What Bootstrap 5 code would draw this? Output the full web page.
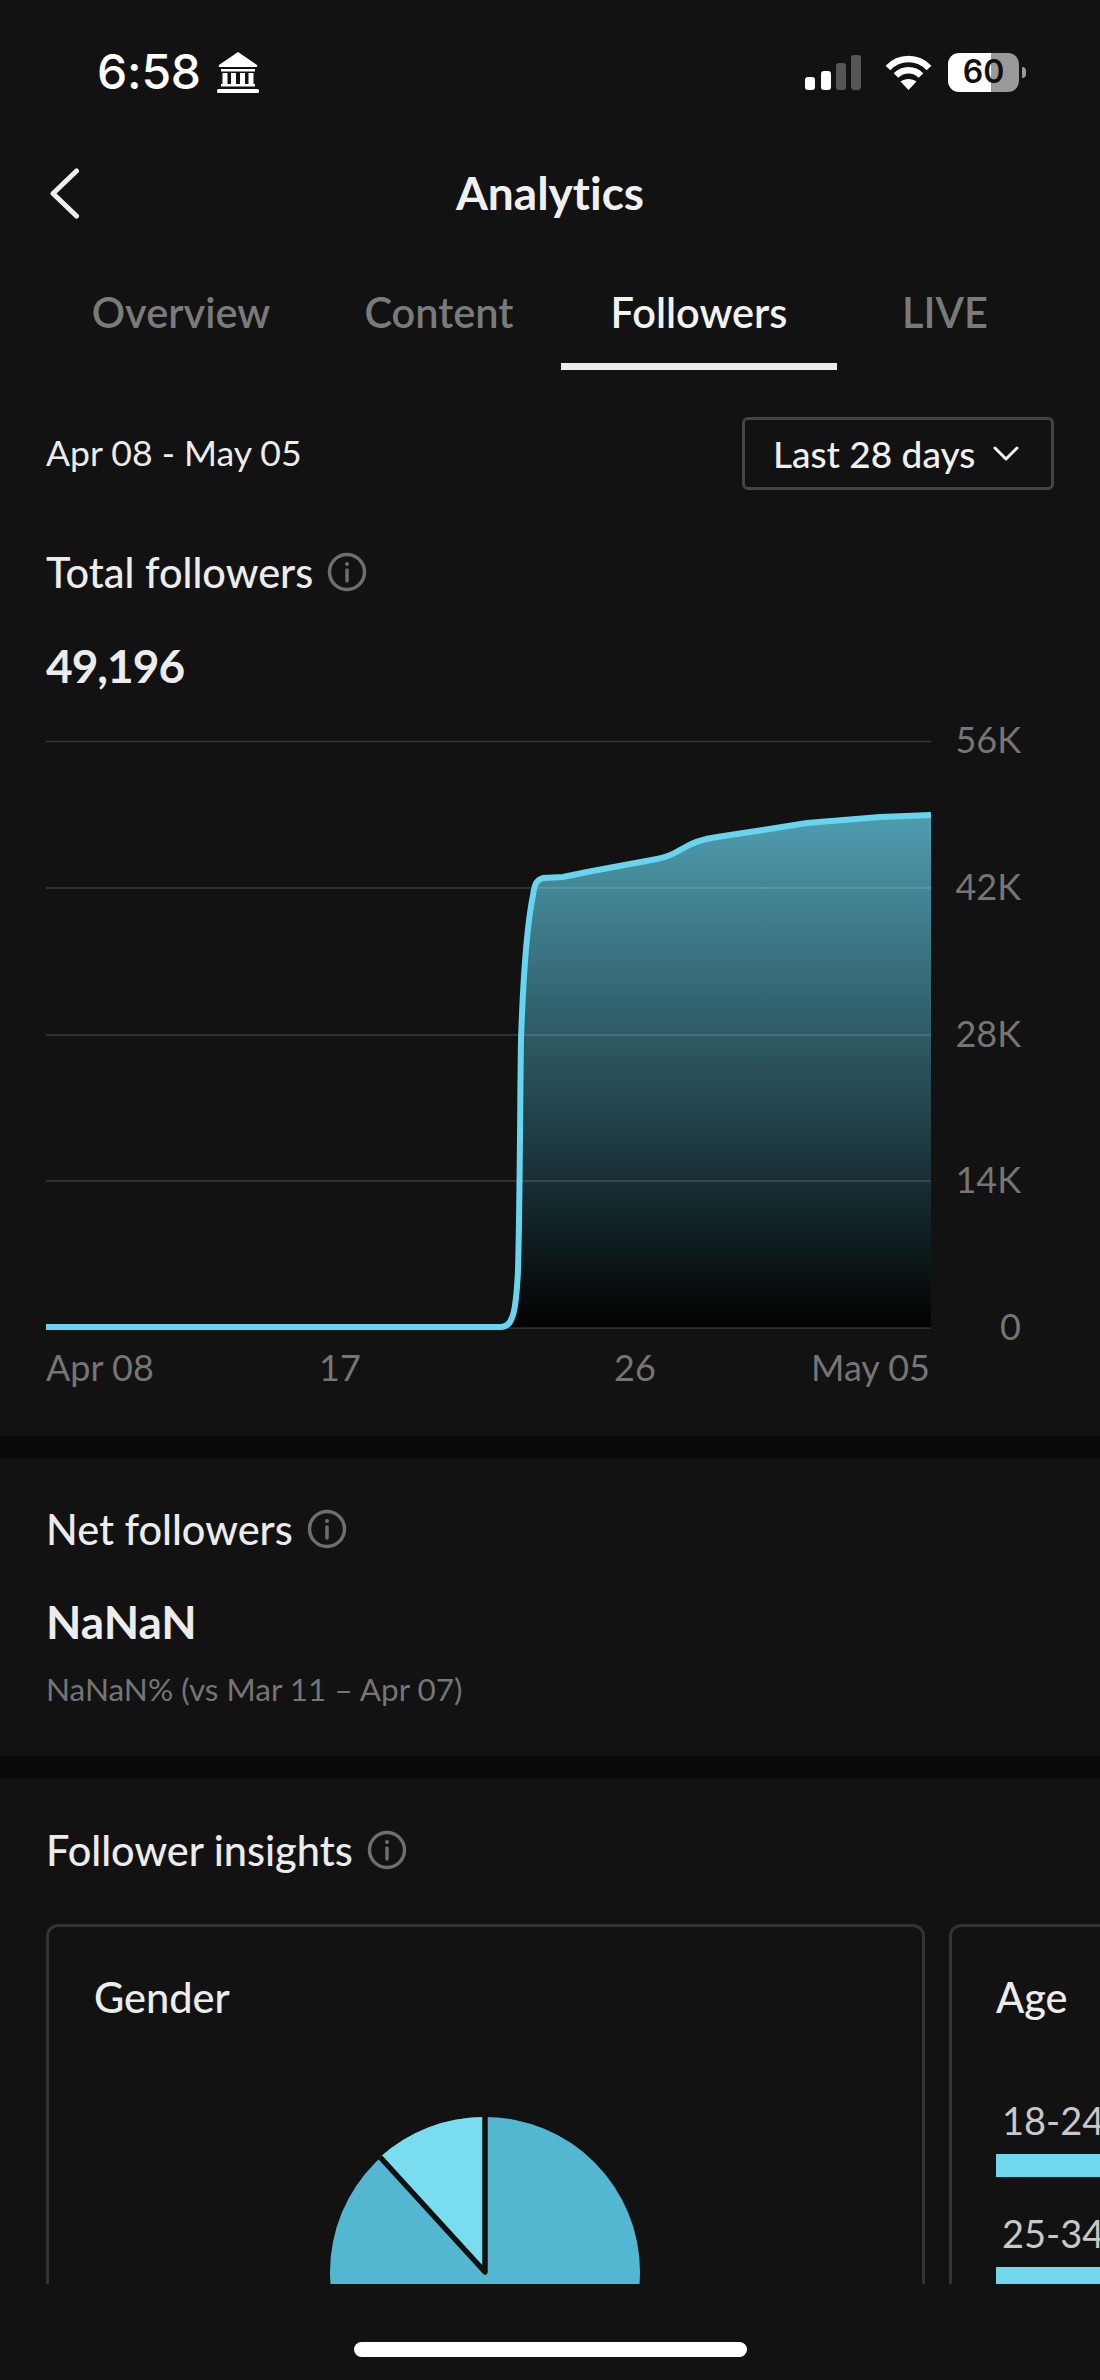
<!DOCTYPE html>
<html lang="en">
<head>
    <meta charset="UTF-8">
    <meta name="viewport" content="width=device-width, initial-scale=1.0">
    <title>Analytics</title>
    <link href="https://cdn.jsdelivr.net/npm/bootstrap@5.3.0/dist/css/bootstrap.min.css" rel="stylesheet">
    <style>
        body { background: #121212; color: #ececec; font-family: "Lato", "Liberation Sans", sans-serif; font-variant-ligatures: none; }
        .phone { width: 1100px; height: 2380px; overflow: hidden; background: #121212; }

        .status-row { height: 144px; padding: 0 74px 0 97px; color: #fff; }
        .status-time { font-family: "Inter", sans-serif; font-size: 48px; font-weight: 500; letter-spacing: -.2px; line-height: 1; }
        .battery-body { width: 71px; height: 39px; border-radius: 11px; background: linear-gradient(90deg, #fff 60%, #999 60%); color: #111; font-family: "Inter", sans-serif; font-size: 32px; font-weight: 600; line-height: 1; }
        .battery-cap { width: 4px; height: 11px; margin-left: 3px; background: #999; border-radius: 0 4px 4px 0; }

        .head-row { height: 98px; padding: 0 50px; }
        .head-title { flex-grow: 1; text-align: center; font-size: 46px; font-weight: 700; margin-top: -2px; color: #f0f0f0; }
        .back-icon { width: 29px; height: 51px; flex-shrink: 0; }
        .head-spacer { width: 29px; flex-shrink: 0; }

        .tabs-row { height: 128px; margin-left: 45px; }
        .tabs-row .nav-link { padding: 0; height: 128px; line-height: 140px; text-align: center; font-size: 41.5px; font-weight: 600; color: #7a7a7a; }
        .tabs-row .nav-link.active { color: #f2f2f2; border-bottom: 7px solid #ececec; }
        .tab-overview { width: 272px; }
        .tab-content-link { width: 244px; }
        .tab-followers { width: 276px; }
        .tab-live { width: 216px; }

        .page-pad { padding-left: 46px; padding-right: 46px; }
        .range-wrap { margin-top: 47px; }
        .range-text { font-size: 35.6px; margin-top: -2px; }
        .range-btn { width: 312px; height: 73px; padding: 0 0 0 28px; border: 3px solid #444; border-radius: 6px; color: #f0f0f0; font-size: 37px; font-weight: 500; gap: 18px; }
        .range-btn:hover { color: #f0f0f0; border-color: #444; }

        .block-title { font-size: 41.5px; font-weight: 500; line-height: 50px; color: #ececec; gap: 14px; }
        .info-icon { width: 40px; height: 40px; flex-shrink: 0; }
        .block-value { font-size: 46px; font-weight: 700; line-height: 60px; }
        .total-value { margin-top: 39px; letter-spacing: -1px; }
        .net-value { margin-top: 38px; }
        .block-note { font-size: 31.5px; line-height: 40px; color: #757575; margin-top: 17px; }

        .followers-sec { height: 946px; padding-top: 57px; }
        .net-sec { height: 298px; padding-top: 46px; }
        .insights-sec { height: 506px; padding-top: 47px; overflow: hidden; }
        .gap-band { height: 22px; background: #0a0a0a; }

        .chart-svg { display: block; width: 1100px; height: 740px; margin-left: -46px; }
        .axis-text { font-family: "Lato", "Liberation Sans", sans-serif; font-size: 36px; fill: #757575; }

        .card-strip { margin-top: 49px; margin-left: 46px; gap: 24px; width: 1200px; }
        .stat-card { flex-shrink: 0; height: 500px; background: transparent; border: 3px solid #333; border-radius: 12px; color: #ececec; }
        .gender-card { width: 879px; padding: 45px 45px; }
        .age-card { width: 300px; padding: 45px 44px; }
        .stat-card-title { font-size: 41.5px; font-weight: 500; line-height: 50px; flex-shrink: 0; }
        .age-first { margin-top: 75px; }
        .age-label { font-size: 38px; line-height: 46px; color: #c8c8c8; padding-left: 6px; white-space: nowrap; flex-shrink: 0; }
        .age-bar { height: 23px; background: #6fd8ee; margin-top: 11px; margin-bottom: 33px; width: 300px; flex-shrink: 0; }
        .pie-svg { display: block; flex-shrink: 0; width: 310px; height: 320px; margin: 95px 0 0 236px; }

        .home-area { height: 96px; padding-top: 58px; }
        .home-bar { width: 393px; height: 15px; border-radius: 8px; background: #fff; }
    </style>
</head>
<body>
    <div class="phone">
        <!-- status bar -->
        <div class="status-row d-flex align-items-center justify-content-between">
            <div class="d-flex align-items-center gap-3">
                <span class="status-time">6:58</span>
                <svg width="42" height="41" viewBox="0 0 42 41" fill="#fff">
                    <path d="M21 0 L40 13 Q41 15 39 15 L3 15 Q1 15 2 13 Z"/>
                    <rect x="4" y="17" width="34" height="2.5"/>
                    <rect x="5.5" y="21" width="5" height="13"/><rect x="14" y="21" width="5" height="13"/>
                    <rect x="23" y="21" width="5" height="13"/><rect x="31.5" y="21" width="5" height="13"/>
                    <rect x="4" y="32" width="34" height="2.5"/>
                    <rect x="0" y="37" width="42" height="4" rx="1.5"/>
                </svg>
            </div>
            <div class="d-flex align-items-center">
                <svg width="56" height="35" viewBox="0 0 56 35" class="me-4">
                    <rect x="0" y="22" width="10" height="13" rx="3" fill="#fff"/>
                    <rect x="16" y="16" width="10" height="19" rx="3" fill="#fff"/>
                    <rect x="31" y="8" width="10" height="27" rx="3" fill="#555"/>
                    <rect x="46" y="0" width="10" height="35" rx="3" fill="#555"/>
                </svg>
                <svg width="47" height="35" viewBox="0 0 47 35" fill="none" stroke="#fff" stroke-width="6.5" class="me-3">
                    <path d="M3 13 C14 1 33 1 44 13"/>
                    <path d="M11 20.5 C18 13.5 29 13.5 36 20.5"/>
                    <path d="M23.5 35 L15.5 26.5 C20 23 27 23 31.5 26.5 Z" fill="#fff" stroke="none"/>
                </svg>
                <div class="battery-body d-flex align-items-center justify-content-center">60</div>
                <div class="battery-cap"></div>
            </div>
        </div>

        <!-- header -->
        <div class="head-row d-flex align-items-center">
            <svg class="back-icon" viewBox="0 0 29 51" fill="none" stroke="#eee" stroke-width="5" stroke-linecap="round" stroke-linejoin="round">
                <path d="M26.5 3 L3 25.5 L26.5 48"/>
            </svg>
            <div class="head-title">Analytics</div>
            <div class="head-spacer"></div>
        </div>

        <!-- tabs -->
        <ul class="nav tabs-row flex-nowrap">
            <li class="nav-item tab-overview"><a class="nav-link" href="#">Overview</a></li>
            <li class="nav-item tab-content-link"><a class="nav-link" href="#">Content</a></li>
            <li class="nav-item tab-followers"><a class="nav-link active" href="#">Followers</a></li>
            <li class="nav-item tab-live"><a class="nav-link" href="#">LIVE</a></li>
        </ul>

        <!-- date range -->
        <div class="page-pad range-wrap d-flex align-items-center justify-content-between">
            <span class="range-text">Apr 08 - May 05</span>
            <button type="button" class="btn range-btn d-flex align-items-center">
                Last 28 days
                <svg width="26" height="15" viewBox="0 0 26 15" fill="none" stroke="#f0f0f0" stroke-width="3" stroke-linecap="round" stroke-linejoin="round"><path d="M2 2 L13 13 L24 2"/></svg>
            </button>
        </div>

        <!-- total followers -->
        <div class="followers-sec page-pad">
            <div class="block-title d-flex align-items-center">
                Total followers
                <svg class="info-icon" viewBox="0 0 40 40" fill="none" stroke="#6e6e6e" stroke-width="3.5"><circle cx="20" cy="20" r="17.5"/><path d="M20 18 V29" stroke-linecap="round"/><circle cx="20" cy="12" r="2" fill="#6e6e6e" stroke="none"/></svg>
            </div>
            <div class="block-value total-value">49,196</div>
            <svg class="chart-svg" viewBox="0 696 1100 740">
                <defs>
                    <linearGradient id="areaFade" x1="0" y1="815" x2="0" y2="1328" gradientUnits="userSpaceOnUse">
                        <stop offset="0" stop-color="#4f9db0"/>
                        <stop offset="1" stop-color="#020202"/>
                    </linearGradient>
                </defs>
                <path fill="url(#areaFade)" d="M505 1328 C512 1328 516 1315 518 1270 C520 1200 520 1100 521 1040 C523 980 526 930 533 895 C535 882 537 880 543 878 L563 877 L587 872 L657 859 C668 857 675 853 680 850 C688 845 700 839 717 837 L763 830 L807 823 L880 817 L931 815 L931 1328 Z"/>
                <g stroke="#fff" stroke-opacity=".17" stroke-width="1.5">
                    <line x1="46" x2="931" y1="741.5" y2="741.5"/>
                    <line x1="46" x2="931" y1="888" y2="888"/>
                    <line x1="46" x2="931" y1="1035" y2="1035"/>
                    <line x1="46" x2="931" y1="1181" y2="1181"/>
                    <line x1="46" x2="931" y1="1328" y2="1328"/>
                </g>
                <path fill="none" stroke="#67d5ef" stroke-width="6" d="M46 1327 L500 1327 C512 1328 516 1315 518 1270 C520 1200 520 1100 521 1040 C523 980 526 930 533 895 C535 882 537 880 543 878 L563 877 L587 872 L657 859 C668 857 675 853 680 850 C688 845 700 839 717 837 L763 830 L807 823 L880 817 L931 815"/>
                <g class="axis-text" text-anchor="end">
                    <text x="1021" y="753">56K</text>
                    <text x="1021" y="900">42K</text>
                    <text x="1021" y="1047">28K</text>
                    <text x="1021" y="1193">14K</text>
                    <text x="1021" y="1340">0</text>
                </g>
                <g class="axis-text">
                    <text x="46" y="1381">Apr 08</text>
                    <text x="340" y="1381" text-anchor="middle">17</text>
                    <text x="635" y="1381" text-anchor="middle">26</text>
                    <text x="930" y="1381" text-anchor="end">May 05</text>
                </g>
            </svg>
        </div>
        <div class="gap-band"></div>

        <!-- net followers -->
        <div class="net-sec page-pad">
            <div class="block-title d-flex align-items-center">
                Net followers
                <svg class="info-icon" viewBox="0 0 40 40" fill="none" stroke="#6e6e6e" stroke-width="3.5"><circle cx="20" cy="20" r="17.5"/><path d="M20 18 V29" stroke-linecap="round"/><circle cx="20" cy="12" r="2" fill="#6e6e6e" stroke="none"/></svg>
            </div>
            <div class="block-value net-value">NaNaN</div>
            <div class="block-note">NaNaN% (vs Mar 11 – Apr 07)</div>
        </div>
        <div class="gap-band"></div>

        <!-- follower insights -->
        <div class="insights-sec">
            <div class="block-title page-pad d-flex align-items-center">
                Follower insights
                <svg class="info-icon" viewBox="0 0 40 40" fill="none" stroke="#6e6e6e" stroke-width="3.5"><circle cx="20" cy="20" r="17.5"/><path d="M20 18 V29" stroke-linecap="round"/><circle cx="20" cy="12" r="2" fill="#6e6e6e" stroke="none"/></svg>
            </div>
            <div class="card-strip d-flex">
                <div class="card stat-card gender-card">
                    <div class="stat-card-title">Gender</div>
                    <svg class="pie-svg" viewBox="330 2117 310 320">
                        <circle cx="485" cy="2272" r="155" fill="#54b7d1"/>
                        <path d="M485 2272 L380 2157 A155 155 0 0 1 485 2117 Z" fill="#7adcef"/>
                        <path d="M380 2157 L485 2272 L485 2117" fill="none" stroke="#111" stroke-width="5.5" stroke-linecap="butt" stroke-linejoin="round"/>
                    </svg>
                </div>
                <div class="card stat-card age-card">
                    <div class="stat-card-title">Age</div>
                    <div class="age-label age-first">18-24</div>
                    <div class="age-bar"></div>
                    <div class="age-label">25-34</div>
                    <div class="age-bar"></div>
                </div>
            </div>
        </div>

        <!-- home indicator -->
        <div class="home-area d-flex justify-content-center">
            <div class="home-bar"></div>
        </div>
    </div>
    <script src="https://cdn.jsdelivr.net/npm/bootstrap@5.3.0/dist/js/bootstrap.bundle.min.js"></script>
</body>
</html>
